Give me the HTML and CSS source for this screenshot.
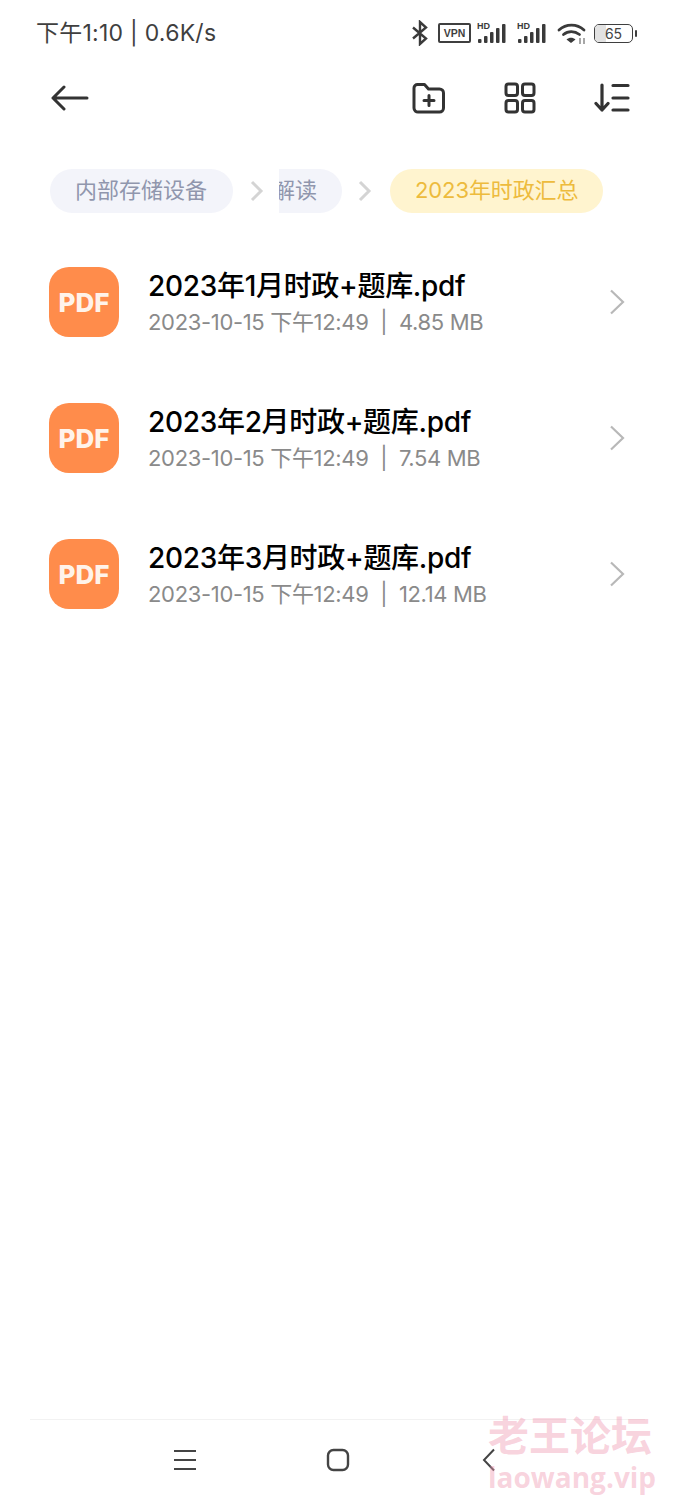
FILE: index.html
```html
<!DOCTYPE html>
<html lang="zh">
<head>
<meta charset="utf-8">
<title>2023年时政汇总</title>
<link rel="stylesheet" href="styles.css">
</head>
<body>
<div class="screen">
  <header class="status">
    <span class="status-text">下午1:10 | 0.6K/s</span>
    <div class="status-icons">
      <svg class="ic-bt" width="18" height="26" viewBox="0 0 18 26"><path d="M2 7.500l13 11-6 5.500V2l6 5.500-13 11" fill="none" stroke="#3a3a3a" stroke-width="2.400"/></svg>
      <span class="vpn">VPN</span>
      <svg width="32" height="24" viewBox="0 0 32 24"><text x="0" y="7.500" class="hd">HD</text><rect x="1" y="18" width="3.500" height="4" rx="1" fill="#3a3a3a"/><rect x="7" y="15" width="3.500" height="7" rx="1" fill="#3a3a3a"/><rect x="13" y="11" width="3.500" height="11" rx="1" fill="#3a3a3a"/><rect x="19" y="7" width="3.500" height="15" rx="1" fill="#3a3a3a"/><rect x="25" y="3" width="3.500" height="19" rx="1" fill="#3a3a3a"/></svg>
      <svg width="32" height="24" viewBox="0 0 32 24"><text x="0" y="7.500" class="hd">HD</text><rect x="1" y="18" width="3.500" height="4" rx="1" fill="#3a3a3a"/><rect x="7" y="15" width="3.500" height="7" rx="1" fill="#3a3a3a"/><rect x="13" y="11" width="3.500" height="11" rx="1" fill="#3a3a3a"/><rect x="19" y="7" width="3.500" height="15" rx="1" fill="#3a3a3a"/><rect x="25" y="3" width="3.500" height="19" rx="1" fill="#3a3a3a"/></svg>
      <svg width="30" height="24" viewBox="0 0 30 24"><g fill="none" stroke="#3a3a3a" stroke-width="2.800" stroke-linecap="round"><path d="M2 9C9 2.500 20 2.500 27 9"/><path d="M6.500 13.500c4.500-3.800 11-3.800 16 0"/></g><path d="M9.500 18.500c2.700-2.400 6.300-2.400 9 0L14 22z" fill="#3a3a3a"/><path d="M23 17v6M27 17v6" stroke="#8a8a8a" stroke-width="1.500"/></svg>
      <div class="battery"><div class="battery-body"><span class="battery-fill"></span><span class="battery-num">65</span></div><span class="battery-tip"></span></div>
    </div>
  </header>

  <nav class="toolbar">
    <svg width="38" height="26" viewBox="0 0 38 26"><path d="M13 2L2 13l11 11M2 13h34" fill="none" stroke="#333" stroke-width="3" stroke-linecap="round" stroke-linejoin="round"/></svg>
    <div class="tools">
      <svg width="34" height="32" viewBox="0 0 34 32"><path d="M2 6a3.500 3.500 0 0 1 3.500-3.500h7l4 4.500h11A4 4 0 0 1 31.500 11v15a4 4 0 0 1-4 4h-21a4 4 0 0 1-4.500-4z" fill="none" stroke="#333" stroke-width="3" stroke-linejoin="round"/><path d="M17 13.500v10M12 18.500h10" stroke="#333" stroke-width="3" stroke-linecap="round"/></svg>
      <svg width="32" height="32" viewBox="0 0 32 32"><g fill="none" stroke="#333" stroke-width="3"><rect x="2" y="2" width="11.500" height="11.500" rx="2.500"/><rect x="18.500" y="2" width="11.500" height="11.500" rx="2.500"/><rect x="2" y="18.500" width="11.500" height="11.500" rx="2.500"/><rect x="18.500" y="18.500" width="11.500" height="11.500" rx="2.500"/></g></svg>
      <svg width="36" height="30" viewBox="0 0 36 30"><g fill="none" stroke="#333" stroke-width="3.200" stroke-linecap="round" stroke-linejoin="round"><path d="M8 2v25M2 20.500L8 27l6-6.500"/><path d="M19 2.500h15M19 15h15M19 27h15"/></g></svg>
    </div>
  </nav>

  <div class="crumbs">
    <span class="crumb crumb-first">内部存储设备</span>
    <svg class="crumb-sep" width="14" height="22" viewBox="0 0 14 22"><path d="M2 2l9 9-9 9" fill="none" stroke="#d4d4d4" stroke-width="3"/></svg>
    <span class="crumb crumb-cut">解读</span>
    <svg class="crumb-sep" width="14" height="22" viewBox="0 0 14 22"><path d="M2 2l9 9-9 9" fill="none" stroke="#d4d4d4" stroke-width="3"/></svg>
    <span class="crumb crumb-active">2023年时政汇总</span>
  </div>

  <ul class="files">
    <li class="file">
      <span class="pdf">PDF</span>
      <div class="meta"><div class="name">2023年1月时政+题库.pdf</div><div class="sub">2023-10-15 下午12:49 &nbsp;|&nbsp; 4.85 MB</div></div>
      <svg class="go" width="16" height="26" viewBox="0 0 16 26"><path d="M2 1.500L14 13 2 24.500" fill="none" stroke="#b8b8b8" stroke-width="2.200"/></svg>
    </li>
    <li class="file">
      <span class="pdf">PDF</span>
      <div class="meta"><div class="name">2023年2月时政+题库.pdf</div><div class="sub">2023-10-15 下午12:49 &nbsp;|&nbsp; 7.54 MB</div></div>
      <svg class="go" width="16" height="26" viewBox="0 0 16 26"><path d="M2 1.500L14 13 2 24.500" fill="none" stroke="#b8b8b8" stroke-width="2.200"/></svg>
    </li>
    <li class="file">
      <span class="pdf">PDF</span>
      <div class="meta"><div class="name">2023年3月时政+题库.pdf</div><div class="sub">2023-10-15 下午12:49 &nbsp;|&nbsp; 12.14 MB</div></div>
      <svg class="go" width="16" height="26" viewBox="0 0 16 26"><path d="M2 1.500L14 13 2 24.500" fill="none" stroke="#b8b8b8" stroke-width="2.200"/></svg>
    </li>
  </ul>

  <footer class="navbar">
    <svg width="24" height="24" viewBox="0 0 24 24"><path d="M1 3h22M1 12h22M1 21h22" stroke="#444" stroke-width="2.200"/></svg>
    <svg width="24" height="24" viewBox="0 0 24 24"><rect x="2" y="2" width="20" height="20" rx="5.500" fill="none" stroke="#444" stroke-width="2.400"/></svg>
    <svg class="nav-back" width="14" height="24" viewBox="0 0 14 24"><path d="M12 1.500L2 12l10 10.500" fill="none" stroke="#444" stroke-width="2"/></svg>
  </footer>

  <div class="watermark"><div class="wm-cn">老王论坛</div><div class="wm-en">laowang.vip</div></div>
</div>
</body>
</html>
```

FILE: styles.css
```css
* { box-sizing: border-box; }
html, body { margin: 0; padding: 0; background: #fff; }
body { font-family: Inter, "Noto Sans CJK SC", sans-serif; }
.screen {
  position: relative;
  width: 675px;
  height: 1500px;
  display: flex;
  flex-direction: column;
  overflow: hidden;
  background: #fff;
}
.status {
  height: 64px;
  flex: none;
  padding: 0 38px 0 36px;
  display: flex;
  align-items: center;
  justify-content: space-between;
  color: #3f3f3f;
}
.status-text { font-size: 23px; line-height: 32px; letter-spacing: 0.25px; white-space: nowrap; position: relative; top: 1px; }
.status-icons { display: flex; align-items: center; gap: 8px; position: relative; top: 1px; }
.hd { font: 700 9px "Liberation Sans", sans-serif; fill: #3a3a3a; }
.vpn {
  width: 33px;
  height: 20px;
  margin: 0 -2px 0 1px;
  border: 2px solid #3f3f3f;
  border-radius: 2px;
  font: 700 10.500px/16px "Liberation Sans", sans-serif;
  text-align: center;
  color: #3f3f3f;
}
.battery { display: flex; align-items: center; gap: 2px; margin-left: -1px; }
.battery-body {
  position: relative;
  width: 39px;
  height: 19px;
  border: 1.500px solid #3f3f3f;
  border-radius: 5px;
  overflow: hidden;
  display: flex;
  align-items: center;
  justify-content: center;
}
.battery-fill { position: absolute; left: 0; top: 0; bottom: 0; width: 11px; background: #e2e2e2; }
.battery-num { position: relative; font-size: 14px; line-height: 15px; color: #444; }
.battery-tip { width: 2px; height: 7px; background: #3f3f3f; border-radius: 1px; }

.toolbar {
  height: 68px;
  flex: none;
  padding: 0 45px 0 51px;
  display: flex;
  align-items: center;
  justify-content: space-between;
}
.tools { display: flex; align-items: center; gap: 58px; }
.crumbs {
  flex: none;
  margin-top: 37px;
  padding-left: 50px;
  height: 44px;
  display: flex;
  align-items: center;
  font-size: 22px;
  white-space: nowrap;
}
.crumb { height: 44px; line-height: 43px; border-radius: 22px; }
.crumb-first { width: 183px; padding-left: 25px; background: #f3f4fa; color: #9096ad; }
.crumb-sep { flex: none; margin-left: 17px; }
.crumb-cut {
  width: 63px;
  margin-left: 15px;
  background: #f3f4fa;
  color: #9096ad;
  border-radius: 0 22px 22px 0;
  overflow: hidden;
  direction: rtl;
  padding-right: 25px;
}
.crumb-active { width: 213px; margin-left: 18px; padding-left: 25px; letter-spacing: -0.1px; background: #fff4cf; color: #edbb3d; }
.crumb-cut + .crumb-sep { margin-left: 16px; }

.files { list-style: none; margin: 54px 0 0; padding: 0; }
.file { height: 70px; padding-left: 49px; margin-bottom: 66px; display: flex; align-items: center; }
.pdf {
  flex: none;
  width: 70px;
  height: 70px;
  border-radius: 20px;
  background: #ff8c4b;
  color: #fff3ea;
  font: 800 26px/71px Inter, sans-serif;
  text-align: center;
}
.meta { margin-left: 29px; flex: 1; }
.name { font-size: 28px; line-height: 38px; font-weight: 500; letter-spacing: -0.3px; color: #000; white-space: nowrap; }
.sub { font-size: 22px; line-height: 32px; margin-top: 1px; letter-spacing: -0.33px; color: #8a8a8a; white-space: pre; }
.go { flex: none; margin-right: 50px; }

.navbar {
  position: absolute;
  left: 30px;
  right: 30px;
  top: 1419px;
  height: 81px;
  border-top: 1px solid #f2f2f2;
  display: flex;
  align-items: flex-start;
  padding: 28px 0 0 143px;
  gap: 129px;
}
.nav-back { margin-left: 3px; }
.watermark { position: absolute; left: 488px; top: 1408px; color: rgba(240, 150, 175, 0.42); font-weight: 700; white-space: nowrap; pointer-events: none; }
.wm-cn { font-size: 41px; line-height: 50px; font-family: "Noto Sans CJK SC", sans-serif; }
.wm-en { font-size: 28px; line-height: 36px; margin-top: 1px; font-family: "Open Sans", sans-serif; }
```
